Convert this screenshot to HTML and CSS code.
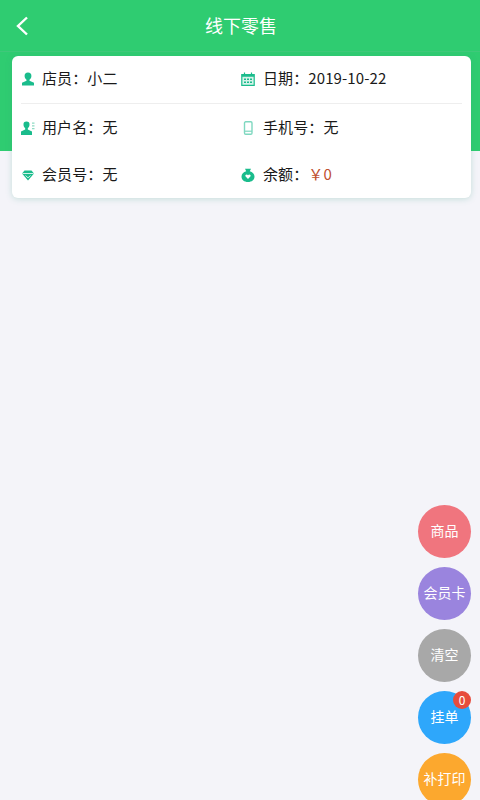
FILE: index.html
```html
<!DOCTYPE html>
<html lang="zh-CN">
<head>
    <meta charset="UTF-8">
    <meta name="viewport" content="width=device-width, initial-scale=1.0">
    <title>线下零售</title>
    <link rel="stylesheet" href="styles.css">
</head>
<body>
    <header class="topbar">
        <button class="back" type="button" aria-label="返回">
            <svg width="14" height="20" viewBox="0 0 14 20"><path d="M12 1.500 3 10l9 8.500" fill="none" stroke="#fff" stroke-width="2.400"/></svg>
        </button>
        <h1>线下零售</h1>
    </header>
    <div class="band">
        <section class="card">
            <div class="row first">
                <div class="cell">
                    <svg class="icon" viewBox="0 0 14 14"><path fill="#1abc8c" d="M7 .5a3.400 3.400 0 0 1 3.400 3.500c0 1.600-.9 2.900-1.900 3.700v1L13 10.700v2.800H1v-2.800l4.500-2v-1C4.500 6.900 3.600 5.600 3.600 4A3.400 3.400 0 0 1 7 .5z"/></svg>
                    <span>店员：小二</span>
                </div>
                <div class="cell">
                    <svg class="icon" viewBox="0 0 14 14"><path fill="#d6f3ea" stroke="#1abc8c" stroke-width="1.200" d="M.8 2.500h12.400v10.800H.8z"/><path fill="none" stroke="#1abc8c" stroke-width="1.200" d="M3.500.5v3M10.500.5v3"/><path fill="#1abc8c" d="M.8 2.500h12.400v2.300H.8zM3 6.500h2v1.500H3zM6 6.500h2v1.500H6zM9 6.500h2v1.500H9zM3 9.500h2V11H3zM6 9.500h2V11H6zM9 9.500h2V11H9z"/></svg>
                    <span>日期：2019-10-22</span>
                </div>
            </div>
            <div class="row">
                <div class="cell">
                    <svg class="icon" viewBox="0 0 14 14"><path fill="#1abc8c" d="M5.500.5a3 3 0 0 1 3 3.200c0 1.500-.8 2.800-1.700 3.500v1.300L11 10.500V14H0v-3.500l4.200-2V7.200C3.300 6.500 2.500 5.200 2.500 3.700A3 3 0 0 1 5.500.5z"/><path fill="#8fdcc4" d="M11 1.500h2.500v1.300H11zM11 4.200h2.500v1.300H11zM11 6.900h2.500v1.300H11z"/></svg>
                    <span>用户名：无</span>
                </div>
                <div class="cell">
                    <svg class="icon" viewBox="0 0 14 14"><rect x="3.500" y=".8" width="7.500" height="12.400" rx="1.200" fill="none" stroke="#7fd8c0" stroke-width="1.400"/><path stroke="#7fd8c0" stroke-width="1.200" d="M3.500 10.200h7.500"/></svg>
                    <span>手机号：无</span>
                </div>
            </div>
            <div class="row">
                <div class="cell">
                    <svg class="icon" viewBox="0 0 14 14"><path fill="#1abc8c" d="M3.500 2.500h7l2.500 3L7 12.500 1 5.500z"/><path fill="none" stroke="#fff" stroke-width=".8" d="M1.500 5.500h11M4.500 7.500 7 9.800l2.500-2.300"/></svg>
                    <span>会员号：无</span>
                </div>
                <div class="cell">
                    <svg class="icon" viewBox="0 0 14 14"><path fill="#1abc8c" d="M4 .8h6L8.800 3.200C11.500 4 13.500 6 13.500 8.500 13.500 11.800 10.800 14 7 14S.5 11.800.5 8.500C.5 6 2.500 4 5.200 3.200z"/><path fill="#fff" d="M7 11 4.600 8.500c-1-1.300 1.200-2.800 2.400-1.300 1.200-1.500 3.400 0 2.400 1.300z"/></svg>
                    <span>余额：<em class="money">￥0</em></span>
                </div>
            </div>
        </section>
    </div>

    <nav class="fab-list">
        <button class="fab pink" type="button">商品</button>
        <button class="fab purple" type="button">会员卡</button>
        <button class="fab grey" type="button">清空</button>
        <button class="fab blue" type="button">挂单<span class="badge">0</span></button>
        <button class="fab orange" type="button">补打印</button>
    </nav>
</body>
</html>
```

FILE: styles.css
```css
* {
    margin: 0;
    padding: 0;
    box-sizing: border-box;
}

html, body {
    height: 100%;
    overflow: hidden;
}

body {
    font-family: "Noto Sans CJK SC", sans-serif;
    background-color: #f4f4f9;
    color: #1a1a1a;
}

.topbar {
    display: flex;
    align-items: center;
    justify-content: center;
    position: relative;
    height: 52px;
    background-color: #2fcc71;
    border-bottom: 1px solid #3fc87a;
}

.topbar h1 {
    font-size: 18px;
    font-weight: 400;
    color: #fff;
    margin: 0 0 2px 2px;
}

.back {
    position: absolute;
    left: 15px;
    top: 16px;
    display: flex;
    border: none;
    background: none;
}

.band {
    height: 99px;
    padding: 4px 9px 0 12px;
    background-color: #2fcc71;
}

.card {
    height: 142px;
    padding: 0 9px;
    background-color: #fff;
    border-radius: 6px;
    box-shadow: 0 1px 6px rgba(60, 160, 130, 0.25);
}

.row {
    display: grid;
    grid-template-columns: 220px 1fr;
    height: 47px;
}

.row.first {
    height: 48px;
    padding-bottom: 1px;
    border-bottom: 1px solid #eeeeee;
}

.cell {
    display: flex;
    align-items: center;
    gap: 7px;
    font-size: 15px;
    letter-spacing: 0.1px;
}

.cell span {
    margin-bottom: 3px;
}

.cell:last-child span {
    margin-left: 1px;
}

.icon {
    width: 14px;
    height: 14px;
    flex: none;
}

.money {
    font-style: normal;
    color: #c0502f;
}

.fab-list {
    position: absolute;
    left: 418px;
    top: 505px;
    display: flex;
    flex-direction: column;
    gap: 9px;
}

.fab {
    position: relative;
    width: 53px;
    height: 53px;
    padding-bottom: 3px;
    border: none;
    border-radius: 50%;
    font-family: inherit;
    font-size: 14px;
    color: #fff;
}

.pink { background-color: #f0757e; }
.purple { background-color: #9a84de; }
.grey { background-color: #a8a8a8; }
.blue { background-color: #2ea7fb; }
.orange { background-color: #fca82e; }

.badge {
    position: absolute;
    right: 0;
    top: 0;
    width: 18px;
    height: 18px;
    border-radius: 50%;
    background-color: #e74c3c;
    font-size: 12px;
    line-height: 18px;
    text-align: center;
}
```
